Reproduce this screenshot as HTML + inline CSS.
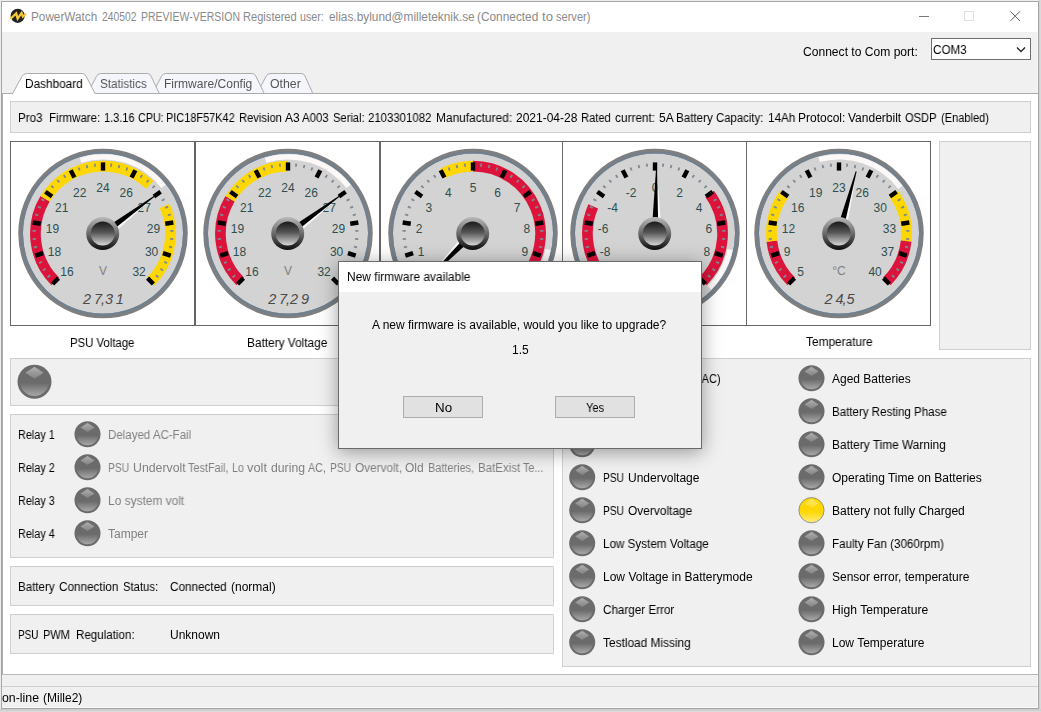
<!DOCTYPE html>
<html><head><meta charset="utf-8"><title>PowerWatch</title>
<style>
html,body{margin:0;padding:0}
body{width:1041px;height:712px;position:relative;overflow:hidden;background:#ececec;font-family:'Liberation Sans',sans-serif;font-size:12px}
.abs{position:absolute;box-sizing:border-box}
.t{will-change:transform;transform-origin:0 0;position:absolute;white-space:pre;line-height:16px;height:16px}
.box{position:absolute;box-sizing:border-box;background:#f0f0f0;border:1px solid #cfcfcf}
svg{position:absolute;left:0;top:0}
svg text{font-family:'Liberation Sans',sans-serif}
</style></head><body>
<!-- window -->
<div class="abs" style="left:1039px;top:0;width:2px;height:712px;background:linear-gradient(90deg,#cdcdcd,#dedede)"></div>
<div class="abs" style="left:0;top:709px;width:1041px;height:3px;background:linear-gradient(180deg,#c8c8c8,#dcdcdc)"></div>
<div class="abs" style="left:1px;top:1px;width:1038px;height:708px;background:#f0f0f0;border:1px solid #a6a6a6;box-shadow:inset -1px -1px 0 #f8f8f8"></div>
<div class="abs" style="left:2px;top:2px;width:1036px;height:30px;background:#fff"></div>
<!-- combo -->
<div class="abs" style="left:931px;top:38px;width:100px;height:22px;background:#fff;border:1px solid #6e6e6e"></div>
<!-- tab panel -->
<div class="abs" style="left:2px;top:93px;width:1036px;height:582px;background:#fff;border:1px solid #acacac;border-bottom-color:#b9b9b9;border-right:none"></div>
<div class="abs" style="left:2px;top:686px;width:1036px;height:1px;background:#d0d0d0"></div>
<!-- boxes -->
<div class="box" style="left:10px;top:101px;width:1021px;height:32px"></div>
<div class="box" style="left:939px;top:141px;width:92px;height:209px"></div>
<div class="box" style="left:10px;top:358px;width:544px;height:48px"></div>
<div class="box" style="left:10px;top:414px;width:544px;height:144px"></div>
<div class="box" style="left:10px;top:566px;width:544px;height:40px"></div>
<div class="box" style="left:10px;top:614px;width:544px;height:40px"></div>
<div class="box" style="left:562px;top:358px;width:469px;height:309px"></div>
<!-- gauge cells -->
<div class="abs" style="left:10px;top:141px;width:921px;height:185px;border:1px solid #666;background:#fff"></div>
<div class="abs" style="left:194px;top:141px;width:2px;height:185px;background:#666"></div>
<div class="abs" style="left:379px;top:141px;width:2px;height:185px;background:#666"></div>
<div class="abs" style="left:562px;top:141px;width:1px;height:185px;background:#6a6a6a"></div>
<div class="abs" style="left:746px;top:141px;width:1px;height:185px;background:#6a6a6a"></div>
<svg width="1041" height="712" viewBox="0 0 1041 712">
<defs>
<linearGradient id="hubo" x1="0" y1="0" x2="0" y2="1"><stop offset="0" stop-color="#b8b8b8"/><stop offset="0.5" stop-color="#6a6a6a"/><stop offset="1" stop-color="#0c0c0c"/></linearGradient>
<linearGradient id="hubi" x1="0" y1="0" x2="0" y2="1"><stop offset="0" stop-color="#1a1a1a"/><stop offset="0.45" stop-color="#555"/><stop offset="1" stop-color="#d8d8d8"/></linearGradient>
<linearGradient id="ledb" x1="0" y1="0" x2="0" y2="1"><stop offset="0" stop-color="#6b6b6b"/><stop offset="0.55" stop-color="#6b6b6b"/><stop offset="1" stop-color="#a8a8a8"/></linearGradient>
<linearGradient id="ledh" x1="0" y1="0" x2="0" y2="1"><stop offset="0" stop-color="#b0b0b0"/><stop offset="1" stop-color="#828282"/></linearGradient>
<linearGradient id="ledyb" x1="0" y1="0" x2="0" y2="1"><stop offset="0" stop-color="#ffd700"/><stop offset="0.55" stop-color="#ffd700"/><stop offset="1" stop-color="#ffec80"/></linearGradient>
<linearGradient id="ledyh" x1="0" y1="0" x2="0" y2="1"><stop offset="0" stop-color="#ffe872"/><stop offset="1" stop-color="#ffdc20"/></linearGradient>
<g id="led"><circle cx="13" cy="13" r="13" fill="#6b6b6b"/><circle cx="13" cy="13" r="11" fill="url(#ledb)"/><path d="M13 1.6L20 6.2L13 10.8L6 6.2Z" fill="url(#ledh)"/></g>
<g id="ledon"><circle cx="13" cy="13" r="12.6" fill="url(#ledyb)" stroke="#858a98" stroke-width="0.9"/><path d="M13 1.6L20 6.2L13 10.8L6 6.2Z" fill="url(#ledyh)"/></g>
</defs>
<!-- tabs -->
<g fill="#f5f6fb" stroke="#acacac" stroke-width="1">
<path d="M257.0 93.5L266.0 76.5Q267.4 73.5 270.2 73.5L301.3 73.5Q303.8 73.5 305.0 76L312.8 93.5Z"/>
<path d="M152.4 93.5L161.4 76.5Q162.8 73.5 165.6 73.5L252.1 73.5Q254.6 73.5 255.8 76L264.2 93.5Z"/>
<path d="M87.4 93.5L96.4 76.5Q97.8 73.5 100.6 73.5L147.3 73.5Q149.8 73.5 151.0 76L159.3 93.5Z"/>
</g>
<path d="M12.5 93.5L22 76.5Q23.7 73.5 26.5 73.5L82 73.5Q84.8 73.5 86 76L95 93.5L95 94.6L12.5 94.6Z" fill="#fff" stroke="none"/>
<path d="M3 93.5L12.5 93.5L22 76.5Q23.7 73.5 26.5 73.5L82 73.5Q84.8 73.5 86 76L95 93.5" fill="none" stroke="#acacac"/>
<!-- title icon -->
<circle cx="17.7" cy="15.8" r="7.1" fill="#222"/>
<path d="M10.3 19L16.2 13.4L17.6 18.6L21.6 12.9L22.8 16.6L26 13.8" fill="none" stroke="#f6c93a" stroke-width="2.2" stroke-linejoin="miter"/>
<!-- window buttons -->
<path d="M919 16.5H929" stroke="#777" stroke-width="1" fill="none"/>
<rect x="964.5" y="11.5" width="9" height="9" fill="none" stroke="#dedede" stroke-width="1"/>
<path d="M1010.3 11.3L1020 21M1020 11.3L1010.3 21" stroke="#666" stroke-width="1" fill="none"/>
<!-- combo chevron -->
<path d="M1017 47.5L1021 51.5L1025 47.5" stroke="#222" stroke-width="1.3" fill="none"/>
<circle cx="103" cy="233.6" r="82.4" fill="#d3d3d3" stroke="#7f7f7f" stroke-width="4.7"/>
<circle cx="103" cy="233.6" r="81.1" fill="none" stroke="#708090" stroke-width="2.2"/>
<path d="M79.79 157.67A79.4 79.4 0 0 1 165.57 184.72L161.47 187.92A74.2 74.2 0 0 0 81.31 162.64Z" fill="#fcf8f8"/>
<path d="M55.23 281.37A67.55 67.55 0 0 1 45.06 198.87" fill="none" stroke="#dc143c" stroke-width="10.7"/>
<path d="M45.06 198.87A67.55 67.55 0 0 1 149.82 184.91" fill="none" stroke="#ffd700" stroke-width="10.7"/>
<path d="M164.62 205.92A67.55 67.55 0 0 1 150.77 281.37" fill="none" stroke="#ffd700" stroke-width="10.7"/>
<rect x="166.0" y="231.4" width="8.2" height="4.4" fill="#000" transform="rotate(-225.00 103 233.6)"/>
<rect x="170.3" y="232.7" width="3.2" height="1.8" fill="#7f8993" transform="rotate(-218.25 103 233.6)"/>
<rect x="170.3" y="232.7" width="3.2" height="1.8" fill="#7f8993" transform="rotate(-211.50 103 233.6)"/>
<rect x="170.3" y="232.7" width="3.2" height="1.8" fill="#7f8993" transform="rotate(-204.75 103 233.6)"/>
<rect x="166.0" y="231.4" width="8.2" height="4.4" fill="#000" transform="rotate(-198.00 103 233.6)"/>
<rect x="170.3" y="232.7" width="3.2" height="1.8" fill="#7f8993" transform="rotate(-191.25 103 233.6)"/>
<rect x="170.3" y="232.7" width="3.2" height="1.8" fill="#7f8993" transform="rotate(-184.50 103 233.6)"/>
<rect x="170.3" y="232.7" width="3.2" height="1.8" fill="#7f8993" transform="rotate(-177.75 103 233.6)"/>
<rect x="166.0" y="231.4" width="8.2" height="4.4" fill="#000" transform="rotate(-171.00 103 233.6)"/>
<rect x="170.3" y="232.7" width="3.2" height="1.8" fill="#7f8993" transform="rotate(-164.25 103 233.6)"/>
<rect x="170.3" y="232.7" width="3.2" height="1.8" fill="#7f8993" transform="rotate(-157.50 103 233.6)"/>
<rect x="170.3" y="232.7" width="3.2" height="1.8" fill="#7f8993" transform="rotate(-150.75 103 233.6)"/>
<rect x="166.0" y="231.4" width="8.2" height="4.4" fill="#000" transform="rotate(-144.00 103 233.6)"/>
<rect x="170.3" y="232.7" width="3.2" height="1.8" fill="#7f8993" transform="rotate(-137.25 103 233.6)"/>
<rect x="170.3" y="232.7" width="3.2" height="1.8" fill="#7f8993" transform="rotate(-130.50 103 233.6)"/>
<rect x="170.3" y="232.7" width="3.2" height="1.8" fill="#7f8993" transform="rotate(-123.75 103 233.6)"/>
<rect x="166.0" y="231.4" width="8.2" height="4.4" fill="#000" transform="rotate(-117.00 103 233.6)"/>
<rect x="170.3" y="232.7" width="3.2" height="1.8" fill="#7f8993" transform="rotate(-110.25 103 233.6)"/>
<rect x="170.3" y="232.7" width="3.2" height="1.8" fill="#7f8993" transform="rotate(-103.50 103 233.6)"/>
<rect x="170.3" y="232.7" width="3.2" height="1.8" fill="#7f8993" transform="rotate(-96.75 103 233.6)"/>
<rect x="166.0" y="231.4" width="8.2" height="4.4" fill="#000" transform="rotate(-90.00 103 233.6)"/>
<rect x="170.3" y="232.7" width="3.2" height="1.8" fill="#7f8993" transform="rotate(-83.25 103 233.6)"/>
<rect x="170.3" y="232.7" width="3.2" height="1.8" fill="#7f8993" transform="rotate(-76.50 103 233.6)"/>
<rect x="170.3" y="232.7" width="3.2" height="1.8" fill="#7f8993" transform="rotate(-69.75 103 233.6)"/>
<rect x="166.0" y="231.4" width="8.2" height="4.4" fill="#000" transform="rotate(-63.00 103 233.6)"/>
<rect x="170.3" y="232.7" width="3.2" height="1.8" fill="#7f8993" transform="rotate(-56.25 103 233.6)"/>
<rect x="170.3" y="232.7" width="3.2" height="1.8" fill="#7f8993" transform="rotate(-49.50 103 233.6)"/>
<rect x="170.3" y="232.7" width="3.2" height="1.8" fill="#7f8993" transform="rotate(-42.75 103 233.6)"/>
<rect x="166.0" y="231.4" width="8.2" height="4.4" fill="#000" transform="rotate(-36.00 103 233.6)"/>
<rect x="170.3" y="232.7" width="3.2" height="1.8" fill="#7f8993" transform="rotate(-29.25 103 233.6)"/>
<rect x="170.3" y="232.7" width="3.2" height="1.8" fill="#7f8993" transform="rotate(-22.50 103 233.6)"/>
<rect x="170.3" y="232.7" width="3.2" height="1.8" fill="#7f8993" transform="rotate(-15.75 103 233.6)"/>
<rect x="166.0" y="231.4" width="8.2" height="4.4" fill="#000" transform="rotate(-9.00 103 233.6)"/>
<rect x="170.3" y="232.7" width="3.2" height="1.8" fill="#7f8993" transform="rotate(-2.25 103 233.6)"/>
<rect x="170.3" y="232.7" width="3.2" height="1.8" fill="#7f8993" transform="rotate(4.50 103 233.6)"/>
<rect x="170.3" y="232.7" width="3.2" height="1.8" fill="#7f8993" transform="rotate(11.25 103 233.6)"/>
<rect x="166.0" y="231.4" width="8.2" height="4.4" fill="#000" transform="rotate(18.00 103 233.6)"/>
<rect x="170.3" y="232.7" width="3.2" height="1.8" fill="#7f8993" transform="rotate(24.75 103 233.6)"/>
<rect x="170.3" y="232.7" width="3.2" height="1.8" fill="#7f8993" transform="rotate(31.50 103 233.6)"/>
<rect x="170.3" y="232.7" width="3.2" height="1.8" fill="#7f8993" transform="rotate(38.25 103 233.6)"/>
<rect x="166.0" y="231.4" width="8.2" height="4.4" fill="#000" transform="rotate(45.00 103 233.6)"/>
<text x="66.9" y="275.5" text-anchor="middle" font-size="12" fill="#2f4f4f">16</text>
<text x="54.4" y="256.0" text-anchor="middle" font-size="12" fill="#2f4f4f">18</text>
<text x="52.5" y="233.2" text-anchor="middle" font-size="12" fill="#2f4f4f">19</text>
<text x="61.7" y="212.1" text-anchor="middle" font-size="12" fill="#2f4f4f">21</text>
<text x="79.8" y="197.2" text-anchor="middle" font-size="12" fill="#2f4f4f">22</text>
<text x="103.0" y="191.9" text-anchor="middle" font-size="12" fill="#2f4f4f">24</text>
<text x="126.2" y="197.2" text-anchor="middle" font-size="12" fill="#2f4f4f">26</text>
<text x="144.3" y="212.1" text-anchor="middle" font-size="12" fill="#2f4f4f">27</text>
<text x="153.5" y="233.2" text-anchor="middle" font-size="12" fill="#2f4f4f">29</text>
<text x="151.6" y="256.0" text-anchor="middle" font-size="12" fill="#2f4f4f">30</text>
<text x="139.1" y="275.5" text-anchor="middle" font-size="12" fill="#2f4f4f">32</text>
<text x="103" y="275.1" text-anchor="middle" font-size="12" fill="#808080">V</text>
<text x="83.1 94.0 101.0 104.9 115.8" y="304.3" font-size="14.5" font-style="italic" font-family="'Liberation Mono',monospace" fill="#4a4a4a">27,31</text>
<g transform="rotate(-36.00 103 233.6)"><path d="M103 234.6L159 234.9L103 240.2Z" fill="#f8f8f8"/><path d="M103 230.2L167.5 233.1L167.5 234.1L103 237.0Z" fill="#000"/></g>
<circle cx="102.7" cy="233.6" r="16.5" fill="url(#hubo)"/><circle cx="102.7" cy="233.6" r="12" fill="url(#hubi)"/>
<circle cx="288" cy="233.6" r="82.4" fill="#d3d3d3" stroke="#7f7f7f" stroke-width="4.7"/>
<circle cx="288" cy="233.6" r="81.1" fill="none" stroke="#708090" stroke-width="2.2"/>
<path d="M264.79 157.67A79.4 79.4 0 0 1 350.57 184.72L346.47 187.92A74.2 74.2 0 0 0 266.31 162.64Z" fill="#fcf8f8"/>
<path d="M240.23 281.37A67.55 67.55 0 0 1 230.06 198.87" fill="none" stroke="#dc143c" stroke-width="10.7"/>
<path d="M230.06 198.87A67.55 67.55 0 0 1 288.00 166.05" fill="none" stroke="#ffd700" stroke-width="10.7"/>
<rect x="351.0" y="231.4" width="8.2" height="4.4" fill="#000" transform="rotate(-225.00 288 233.6)"/>
<rect x="355.3" y="232.7" width="3.2" height="1.8" fill="#7f8993" transform="rotate(-218.25 288 233.6)"/>
<rect x="355.3" y="232.7" width="3.2" height="1.8" fill="#7f8993" transform="rotate(-211.50 288 233.6)"/>
<rect x="355.3" y="232.7" width="3.2" height="1.8" fill="#7f8993" transform="rotate(-204.75 288 233.6)"/>
<rect x="351.0" y="231.4" width="8.2" height="4.4" fill="#000" transform="rotate(-198.00 288 233.6)"/>
<rect x="355.3" y="232.7" width="3.2" height="1.8" fill="#7f8993" transform="rotate(-191.25 288 233.6)"/>
<rect x="355.3" y="232.7" width="3.2" height="1.8" fill="#7f8993" transform="rotate(-184.50 288 233.6)"/>
<rect x="355.3" y="232.7" width="3.2" height="1.8" fill="#7f8993" transform="rotate(-177.75 288 233.6)"/>
<rect x="351.0" y="231.4" width="8.2" height="4.4" fill="#000" transform="rotate(-171.00 288 233.6)"/>
<rect x="355.3" y="232.7" width="3.2" height="1.8" fill="#7f8993" transform="rotate(-164.25 288 233.6)"/>
<rect x="355.3" y="232.7" width="3.2" height="1.8" fill="#7f8993" transform="rotate(-157.50 288 233.6)"/>
<rect x="355.3" y="232.7" width="3.2" height="1.8" fill="#7f8993" transform="rotate(-150.75 288 233.6)"/>
<rect x="351.0" y="231.4" width="8.2" height="4.4" fill="#000" transform="rotate(-144.00 288 233.6)"/>
<rect x="355.3" y="232.7" width="3.2" height="1.8" fill="#7f8993" transform="rotate(-137.25 288 233.6)"/>
<rect x="355.3" y="232.7" width="3.2" height="1.8" fill="#7f8993" transform="rotate(-130.50 288 233.6)"/>
<rect x="355.3" y="232.7" width="3.2" height="1.8" fill="#7f8993" transform="rotate(-123.75 288 233.6)"/>
<rect x="351.0" y="231.4" width="8.2" height="4.4" fill="#000" transform="rotate(-117.00 288 233.6)"/>
<rect x="355.3" y="232.7" width="3.2" height="1.8" fill="#7f8993" transform="rotate(-110.25 288 233.6)"/>
<rect x="355.3" y="232.7" width="3.2" height="1.8" fill="#7f8993" transform="rotate(-103.50 288 233.6)"/>
<rect x="355.3" y="232.7" width="3.2" height="1.8" fill="#7f8993" transform="rotate(-96.75 288 233.6)"/>
<rect x="351.0" y="231.4" width="8.2" height="4.4" fill="#000" transform="rotate(-90.00 288 233.6)"/>
<rect x="355.3" y="232.7" width="3.2" height="1.8" fill="#7f8993" transform="rotate(-83.25 288 233.6)"/>
<rect x="355.3" y="232.7" width="3.2" height="1.8" fill="#7f8993" transform="rotate(-76.50 288 233.6)"/>
<rect x="355.3" y="232.7" width="3.2" height="1.8" fill="#7f8993" transform="rotate(-69.75 288 233.6)"/>
<rect x="351.0" y="231.4" width="8.2" height="4.4" fill="#000" transform="rotate(-63.00 288 233.6)"/>
<rect x="355.3" y="232.7" width="3.2" height="1.8" fill="#7f8993" transform="rotate(-56.25 288 233.6)"/>
<rect x="355.3" y="232.7" width="3.2" height="1.8" fill="#7f8993" transform="rotate(-49.50 288 233.6)"/>
<rect x="355.3" y="232.7" width="3.2" height="1.8" fill="#7f8993" transform="rotate(-42.75 288 233.6)"/>
<rect x="351.0" y="231.4" width="8.2" height="4.4" fill="#000" transform="rotate(-36.00 288 233.6)"/>
<rect x="355.3" y="232.7" width="3.2" height="1.8" fill="#7f8993" transform="rotate(-29.25 288 233.6)"/>
<rect x="355.3" y="232.7" width="3.2" height="1.8" fill="#7f8993" transform="rotate(-22.50 288 233.6)"/>
<rect x="355.3" y="232.7" width="3.2" height="1.8" fill="#7f8993" transform="rotate(-15.75 288 233.6)"/>
<rect x="351.0" y="231.4" width="8.2" height="4.4" fill="#000" transform="rotate(-9.00 288 233.6)"/>
<rect x="355.3" y="232.7" width="3.2" height="1.8" fill="#7f8993" transform="rotate(-2.25 288 233.6)"/>
<rect x="355.3" y="232.7" width="3.2" height="1.8" fill="#7f8993" transform="rotate(4.50 288 233.6)"/>
<rect x="355.3" y="232.7" width="3.2" height="1.8" fill="#7f8993" transform="rotate(11.25 288 233.6)"/>
<rect x="351.0" y="231.4" width="8.2" height="4.4" fill="#000" transform="rotate(18.00 288 233.6)"/>
<rect x="355.3" y="232.7" width="3.2" height="1.8" fill="#7f8993" transform="rotate(24.75 288 233.6)"/>
<rect x="355.3" y="232.7" width="3.2" height="1.8" fill="#7f8993" transform="rotate(31.50 288 233.6)"/>
<rect x="355.3" y="232.7" width="3.2" height="1.8" fill="#7f8993" transform="rotate(38.25 288 233.6)"/>
<rect x="351.0" y="231.4" width="8.2" height="4.4" fill="#000" transform="rotate(45.00 288 233.6)"/>
<text x="251.9" y="275.5" text-anchor="middle" font-size="12" fill="#2f4f4f">16</text>
<text x="239.4" y="256.0" text-anchor="middle" font-size="12" fill="#2f4f4f">18</text>
<text x="237.5" y="233.2" text-anchor="middle" font-size="12" fill="#2f4f4f">19</text>
<text x="246.7" y="212.1" text-anchor="middle" font-size="12" fill="#2f4f4f">21</text>
<text x="264.8" y="197.2" text-anchor="middle" font-size="12" fill="#2f4f4f">22</text>
<text x="288.0" y="191.9" text-anchor="middle" font-size="12" fill="#2f4f4f">24</text>
<text x="311.2" y="197.2" text-anchor="middle" font-size="12" fill="#2f4f4f">26</text>
<text x="329.3" y="212.1" text-anchor="middle" font-size="12" fill="#2f4f4f">27</text>
<text x="338.5" y="233.2" text-anchor="middle" font-size="12" fill="#2f4f4f">29</text>
<text x="336.6" y="256.0" text-anchor="middle" font-size="12" fill="#2f4f4f">30</text>
<text x="324.1" y="275.5" text-anchor="middle" font-size="12" fill="#2f4f4f">32</text>
<text x="288" y="275.1" text-anchor="middle" font-size="12" fill="#808080">V</text>
<text x="268.2 279.1 286.1 290.0 300.9" y="304.3" font-size="14.5" font-style="italic" font-family="'Liberation Mono',monospace" fill="#4a4a4a">27,29</text>
<g transform="rotate(-36.00 288 233.6)"><path d="M288 234.6L344 234.9L288 240.2Z" fill="#f8f8f8"/><path d="M288 230.2L352.5 233.1L352.5 234.1L288 237.0Z" fill="#000"/></g>
<circle cx="287.7" cy="233.6" r="16.5" fill="url(#hubo)"/><circle cx="287.7" cy="233.6" r="12" fill="url(#hubi)"/>
<circle cx="473" cy="233.6" r="82.4" fill="#d3d3d3" stroke="#7f7f7f" stroke-width="4.7"/>
<circle cx="473" cy="233.6" r="81.1" fill="none" stroke="#708090" stroke-width="2.2"/>
<path d="M550.66 250.11A79.4 79.4 0 0 1 529.14 289.74L525.47 286.07A74.2 74.2 0 0 0 545.58 249.03Z" fill="#fcf8f8"/>
<path d="M442.33 173.41A67.55 67.55 0 0 1 473.00 166.05" fill="none" stroke="#ffd700" stroke-width="10.7"/>
<path d="M473.00 166.05A67.55 67.55 0 0 1 520.77 281.37" fill="none" stroke="#dc143c" stroke-width="10.7"/>
<rect x="536.0" y="231.4" width="8.2" height="4.4" fill="#000" transform="rotate(-225.00 473 233.6)"/>
<rect x="540.3" y="232.7" width="3.2" height="1.8" fill="#7f8993" transform="rotate(-218.25 473 233.6)"/>
<rect x="540.3" y="232.7" width="3.2" height="1.8" fill="#7f8993" transform="rotate(-211.50 473 233.6)"/>
<rect x="540.3" y="232.7" width="3.2" height="1.8" fill="#7f8993" transform="rotate(-204.75 473 233.6)"/>
<rect x="536.0" y="231.4" width="8.2" height="4.4" fill="#000" transform="rotate(-198.00 473 233.6)"/>
<rect x="540.3" y="232.7" width="3.2" height="1.8" fill="#7f8993" transform="rotate(-191.25 473 233.6)"/>
<rect x="540.3" y="232.7" width="3.2" height="1.8" fill="#7f8993" transform="rotate(-184.50 473 233.6)"/>
<rect x="540.3" y="232.7" width="3.2" height="1.8" fill="#7f8993" transform="rotate(-177.75 473 233.6)"/>
<rect x="536.0" y="231.4" width="8.2" height="4.4" fill="#000" transform="rotate(-171.00 473 233.6)"/>
<rect x="540.3" y="232.7" width="3.2" height="1.8" fill="#7f8993" transform="rotate(-164.25 473 233.6)"/>
<rect x="540.3" y="232.7" width="3.2" height="1.8" fill="#7f8993" transform="rotate(-157.50 473 233.6)"/>
<rect x="540.3" y="232.7" width="3.2" height="1.8" fill="#7f8993" transform="rotate(-150.75 473 233.6)"/>
<rect x="536.0" y="231.4" width="8.2" height="4.4" fill="#000" transform="rotate(-144.00 473 233.6)"/>
<rect x="540.3" y="232.7" width="3.2" height="1.8" fill="#7f8993" transform="rotate(-137.25 473 233.6)"/>
<rect x="540.3" y="232.7" width="3.2" height="1.8" fill="#7f8993" transform="rotate(-130.50 473 233.6)"/>
<rect x="540.3" y="232.7" width="3.2" height="1.8" fill="#7f8993" transform="rotate(-123.75 473 233.6)"/>
<rect x="536.0" y="231.4" width="8.2" height="4.4" fill="#000" transform="rotate(-117.00 473 233.6)"/>
<rect x="540.3" y="232.7" width="3.2" height="1.8" fill="#7f8993" transform="rotate(-110.25 473 233.6)"/>
<rect x="540.3" y="232.7" width="3.2" height="1.8" fill="#7f8993" transform="rotate(-103.50 473 233.6)"/>
<rect x="540.3" y="232.7" width="3.2" height="1.8" fill="#7f8993" transform="rotate(-96.75 473 233.6)"/>
<rect x="536.0" y="231.4" width="8.2" height="4.4" fill="#000" transform="rotate(-90.00 473 233.6)"/>
<rect x="540.3" y="232.7" width="3.2" height="1.8" fill="#7f8993" transform="rotate(-83.25 473 233.6)"/>
<rect x="540.3" y="232.7" width="3.2" height="1.8" fill="#7f8993" transform="rotate(-76.50 473 233.6)"/>
<rect x="540.3" y="232.7" width="3.2" height="1.8" fill="#7f8993" transform="rotate(-69.75 473 233.6)"/>
<rect x="536.0" y="231.4" width="8.2" height="4.4" fill="#000" transform="rotate(-63.00 473 233.6)"/>
<rect x="540.3" y="232.7" width="3.2" height="1.8" fill="#7f8993" transform="rotate(-56.25 473 233.6)"/>
<rect x="540.3" y="232.7" width="3.2" height="1.8" fill="#7f8993" transform="rotate(-49.50 473 233.6)"/>
<rect x="540.3" y="232.7" width="3.2" height="1.8" fill="#7f8993" transform="rotate(-42.75 473 233.6)"/>
<rect x="536.0" y="231.4" width="8.2" height="4.4" fill="#000" transform="rotate(-36.00 473 233.6)"/>
<rect x="540.3" y="232.7" width="3.2" height="1.8" fill="#7f8993" transform="rotate(-29.25 473 233.6)"/>
<rect x="540.3" y="232.7" width="3.2" height="1.8" fill="#7f8993" transform="rotate(-22.50 473 233.6)"/>
<rect x="540.3" y="232.7" width="3.2" height="1.8" fill="#7f8993" transform="rotate(-15.75 473 233.6)"/>
<rect x="536.0" y="231.4" width="8.2" height="4.4" fill="#000" transform="rotate(-9.00 473 233.6)"/>
<rect x="540.3" y="232.7" width="3.2" height="1.8" fill="#7f8993" transform="rotate(-2.25 473 233.6)"/>
<rect x="540.3" y="232.7" width="3.2" height="1.8" fill="#7f8993" transform="rotate(4.50 473 233.6)"/>
<rect x="540.3" y="232.7" width="3.2" height="1.8" fill="#7f8993" transform="rotate(11.25 473 233.6)"/>
<rect x="536.0" y="231.4" width="8.2" height="4.4" fill="#000" transform="rotate(18.00 473 233.6)"/>
<rect x="540.3" y="232.7" width="3.2" height="1.8" fill="#7f8993" transform="rotate(24.75 473 233.6)"/>
<rect x="540.3" y="232.7" width="3.2" height="1.8" fill="#7f8993" transform="rotate(31.50 473 233.6)"/>
<rect x="540.3" y="232.7" width="3.2" height="1.8" fill="#7f8993" transform="rotate(38.25 473 233.6)"/>
<rect x="536.0" y="231.4" width="8.2" height="4.4" fill="#000" transform="rotate(45.00 473 233.6)"/>
<text x="421.2" y="256.0" text-anchor="middle" font-size="12" fill="#2f4f4f">1</text>
<text x="419.2" y="233.2" text-anchor="middle" font-size="12" fill="#2f4f4f">2</text>
<text x="428.9" y="212.1" text-anchor="middle" font-size="12" fill="#2f4f4f">3</text>
<text x="448.3" y="197.2" text-anchor="middle" font-size="12" fill="#2f4f4f">4</text>
<text x="473.0" y="191.9" text-anchor="middle" font-size="12" fill="#2f4f4f">5</text>
<text x="497.7" y="197.2" text-anchor="middle" font-size="12" fill="#2f4f4f">6</text>
<text x="517.1" y="212.1" text-anchor="middle" font-size="12" fill="#2f4f4f">7</text>
<text x="526.8" y="233.2" text-anchor="middle" font-size="12" fill="#2f4f4f">8</text>
<text x="524.8" y="256.0" text-anchor="middle" font-size="12" fill="#2f4f4f">9</text>
<g transform="rotate(-225.00 473 233.6)"><path d="M473 234.6L529 234.9L473 240.2Z" fill="#f8f8f8"/><path d="M473 230.2L537.5 233.1L537.5 234.1L473 237.0Z" fill="#000"/></g>
<circle cx="472.7" cy="233.6" r="16.5" fill="url(#hubo)"/><circle cx="472.7" cy="233.6" r="12" fill="url(#hubi)"/>
<circle cx="655" cy="233.6" r="82.4" fill="#d3d3d3" stroke="#7f7f7f" stroke-width="4.7"/>
<circle cx="655" cy="233.6" r="81.1" fill="none" stroke="#708090" stroke-width="2.2"/>
<path d="M732.66 250.11A79.4 79.4 0 0 1 711.14 289.74L707.47 286.07A74.2 74.2 0 0 0 727.58 249.03Z" fill="#fcf8f8"/>
<path d="M607.23 281.37A67.55 67.55 0 0 1 593.22 206.29" fill="none" stroke="#dc143c" stroke-width="10.7"/>
<path d="M709.65 193.90A67.55 67.55 0 0 1 702.77 281.37" fill="none" stroke="#dc143c" stroke-width="10.7"/>
<rect x="718.0" y="231.4" width="8.2" height="4.4" fill="#000" transform="rotate(-225.00 655 233.6)"/>
<rect x="722.3" y="232.7" width="3.2" height="1.8" fill="#7f8993" transform="rotate(-218.25 655 233.6)"/>
<rect x="722.3" y="232.7" width="3.2" height="1.8" fill="#7f8993" transform="rotate(-211.50 655 233.6)"/>
<rect x="722.3" y="232.7" width="3.2" height="1.8" fill="#7f8993" transform="rotate(-204.75 655 233.6)"/>
<rect x="718.0" y="231.4" width="8.2" height="4.4" fill="#000" transform="rotate(-198.00 655 233.6)"/>
<rect x="722.3" y="232.7" width="3.2" height="1.8" fill="#7f8993" transform="rotate(-191.25 655 233.6)"/>
<rect x="722.3" y="232.7" width="3.2" height="1.8" fill="#7f8993" transform="rotate(-184.50 655 233.6)"/>
<rect x="722.3" y="232.7" width="3.2" height="1.8" fill="#7f8993" transform="rotate(-177.75 655 233.6)"/>
<rect x="718.0" y="231.4" width="8.2" height="4.4" fill="#000" transform="rotate(-171.00 655 233.6)"/>
<rect x="722.3" y="232.7" width="3.2" height="1.8" fill="#7f8993" transform="rotate(-164.25 655 233.6)"/>
<rect x="722.3" y="232.7" width="3.2" height="1.8" fill="#7f8993" transform="rotate(-157.50 655 233.6)"/>
<rect x="722.3" y="232.7" width="3.2" height="1.8" fill="#7f8993" transform="rotate(-150.75 655 233.6)"/>
<rect x="718.0" y="231.4" width="8.2" height="4.4" fill="#000" transform="rotate(-144.00 655 233.6)"/>
<rect x="722.3" y="232.7" width="3.2" height="1.8" fill="#7f8993" transform="rotate(-137.25 655 233.6)"/>
<rect x="722.3" y="232.7" width="3.2" height="1.8" fill="#7f8993" transform="rotate(-130.50 655 233.6)"/>
<rect x="722.3" y="232.7" width="3.2" height="1.8" fill="#7f8993" transform="rotate(-123.75 655 233.6)"/>
<rect x="718.0" y="231.4" width="8.2" height="4.4" fill="#000" transform="rotate(-117.00 655 233.6)"/>
<rect x="722.3" y="232.7" width="3.2" height="1.8" fill="#7f8993" transform="rotate(-110.25 655 233.6)"/>
<rect x="722.3" y="232.7" width="3.2" height="1.8" fill="#7f8993" transform="rotate(-103.50 655 233.6)"/>
<rect x="722.3" y="232.7" width="3.2" height="1.8" fill="#7f8993" transform="rotate(-96.75 655 233.6)"/>
<rect x="718.0" y="231.4" width="8.2" height="4.4" fill="#000" transform="rotate(-90.00 655 233.6)"/>
<rect x="722.3" y="232.7" width="3.2" height="1.8" fill="#7f8993" transform="rotate(-83.25 655 233.6)"/>
<rect x="722.3" y="232.7" width="3.2" height="1.8" fill="#7f8993" transform="rotate(-76.50 655 233.6)"/>
<rect x="722.3" y="232.7" width="3.2" height="1.8" fill="#7f8993" transform="rotate(-69.75 655 233.6)"/>
<rect x="718.0" y="231.4" width="8.2" height="4.4" fill="#000" transform="rotate(-63.00 655 233.6)"/>
<rect x="722.3" y="232.7" width="3.2" height="1.8" fill="#7f8993" transform="rotate(-56.25 655 233.6)"/>
<rect x="722.3" y="232.7" width="3.2" height="1.8" fill="#7f8993" transform="rotate(-49.50 655 233.6)"/>
<rect x="722.3" y="232.7" width="3.2" height="1.8" fill="#7f8993" transform="rotate(-42.75 655 233.6)"/>
<rect x="718.0" y="231.4" width="8.2" height="4.4" fill="#000" transform="rotate(-36.00 655 233.6)"/>
<rect x="722.3" y="232.7" width="3.2" height="1.8" fill="#7f8993" transform="rotate(-29.25 655 233.6)"/>
<rect x="722.3" y="232.7" width="3.2" height="1.8" fill="#7f8993" transform="rotate(-22.50 655 233.6)"/>
<rect x="722.3" y="232.7" width="3.2" height="1.8" fill="#7f8993" transform="rotate(-15.75 655 233.6)"/>
<rect x="718.0" y="231.4" width="8.2" height="4.4" fill="#000" transform="rotate(-9.00 655 233.6)"/>
<rect x="722.3" y="232.7" width="3.2" height="1.8" fill="#7f8993" transform="rotate(-2.25 655 233.6)"/>
<rect x="722.3" y="232.7" width="3.2" height="1.8" fill="#7f8993" transform="rotate(4.50 655 233.6)"/>
<rect x="722.3" y="232.7" width="3.2" height="1.8" fill="#7f8993" transform="rotate(11.25 655 233.6)"/>
<rect x="718.0" y="231.4" width="8.2" height="4.4" fill="#000" transform="rotate(18.00 655 233.6)"/>
<rect x="722.3" y="232.7" width="3.2" height="1.8" fill="#7f8993" transform="rotate(24.75 655 233.6)"/>
<rect x="722.3" y="232.7" width="3.2" height="1.8" fill="#7f8993" transform="rotate(31.50 655 233.6)"/>
<rect x="722.3" y="232.7" width="3.2" height="1.8" fill="#7f8993" transform="rotate(38.25 655 233.6)"/>
<rect x="718.0" y="231.4" width="8.2" height="4.4" fill="#000" transform="rotate(45.00 655 233.6)"/>
<text x="605.1" y="256.0" text-anchor="middle" font-size="12" fill="#2f4f4f">-8</text>
<text x="603.2" y="233.2" text-anchor="middle" font-size="12" fill="#2f4f4f">-6</text>
<text x="612.6" y="212.1" text-anchor="middle" font-size="12" fill="#2f4f4f">-4</text>
<text x="631.2" y="197.2" text-anchor="middle" font-size="12" fill="#2f4f4f">-2</text>
<text x="655.0" y="191.9" text-anchor="middle" font-size="12" fill="#2f4f4f">0</text>
<text x="679.7" y="197.2" text-anchor="middle" font-size="12" fill="#2f4f4f">2</text>
<text x="699.1" y="212.1" text-anchor="middle" font-size="12" fill="#2f4f4f">4</text>
<text x="708.8" y="233.2" text-anchor="middle" font-size="12" fill="#2f4f4f">6</text>
<text x="706.8" y="256.0" text-anchor="middle" font-size="12" fill="#2f4f4f">8</text>
<g transform="rotate(-88.65 655 233.6)"><path d="M655 234.6L711 234.9L655 240.2Z" fill="#f8f8f8"/><path d="M655 230.2L719.5 233.1L719.5 234.1L655 237.0Z" fill="#000"/></g>
<circle cx="654.7" cy="233.6" r="16.5" fill="url(#hubo)"/><circle cx="654.7" cy="233.6" r="12" fill="url(#hubi)"/>
<circle cx="839" cy="233.6" r="82.4" fill="#d3d3d3" stroke="#7f7f7f" stroke-width="4.7"/>
<circle cx="839" cy="233.6" r="81.1" fill="none" stroke="#708090" stroke-width="2.2"/>
<path d="M818.45 156.91A79.4 79.4 0 0 1 902.41 185.82L898.26 188.95A74.2 74.2 0 0 0 819.80 161.93Z" fill="#fcf8f8"/>
<path d="M791.23 281.37A67.55 67.55 0 0 1 771.87 241.16" fill="none" stroke="#dc143c" stroke-width="10.7"/>
<path d="M771.87 241.16A67.55 67.55 0 0 1 784.35 193.90" fill="none" stroke="#ffd700" stroke-width="10.7"/>
<path d="M893.65 193.90A67.55 67.55 0 0 1 906.13 241.16" fill="none" stroke="#ffd700" stroke-width="10.7"/>
<path d="M906.13 241.16A67.55 67.55 0 0 1 886.77 281.37" fill="none" stroke="#dc143c" stroke-width="10.7"/>
<rect x="902.0" y="231.4" width="8.2" height="4.4" fill="#000" transform="rotate(-225.00 839 233.6)"/>
<rect x="906.3" y="232.7" width="3.2" height="1.8" fill="#7f8993" transform="rotate(-218.25 839 233.6)"/>
<rect x="906.3" y="232.7" width="3.2" height="1.8" fill="#7f8993" transform="rotate(-211.50 839 233.6)"/>
<rect x="906.3" y="232.7" width="3.2" height="1.8" fill="#7f8993" transform="rotate(-204.75 839 233.6)"/>
<rect x="902.0" y="231.4" width="8.2" height="4.4" fill="#000" transform="rotate(-198.00 839 233.6)"/>
<rect x="906.3" y="232.7" width="3.2" height="1.8" fill="#7f8993" transform="rotate(-191.25 839 233.6)"/>
<rect x="906.3" y="232.7" width="3.2" height="1.8" fill="#7f8993" transform="rotate(-184.50 839 233.6)"/>
<rect x="906.3" y="232.7" width="3.2" height="1.8" fill="#7f8993" transform="rotate(-177.75 839 233.6)"/>
<rect x="902.0" y="231.4" width="8.2" height="4.4" fill="#000" transform="rotate(-171.00 839 233.6)"/>
<rect x="906.3" y="232.7" width="3.2" height="1.8" fill="#7f8993" transform="rotate(-164.25 839 233.6)"/>
<rect x="906.3" y="232.7" width="3.2" height="1.8" fill="#7f8993" transform="rotate(-157.50 839 233.6)"/>
<rect x="906.3" y="232.7" width="3.2" height="1.8" fill="#7f8993" transform="rotate(-150.75 839 233.6)"/>
<rect x="902.0" y="231.4" width="8.2" height="4.4" fill="#000" transform="rotate(-144.00 839 233.6)"/>
<rect x="906.3" y="232.7" width="3.2" height="1.8" fill="#7f8993" transform="rotate(-137.25 839 233.6)"/>
<rect x="906.3" y="232.7" width="3.2" height="1.8" fill="#7f8993" transform="rotate(-130.50 839 233.6)"/>
<rect x="906.3" y="232.7" width="3.2" height="1.8" fill="#7f8993" transform="rotate(-123.75 839 233.6)"/>
<rect x="902.0" y="231.4" width="8.2" height="4.4" fill="#000" transform="rotate(-117.00 839 233.6)"/>
<rect x="906.3" y="232.7" width="3.2" height="1.8" fill="#7f8993" transform="rotate(-110.25 839 233.6)"/>
<rect x="906.3" y="232.7" width="3.2" height="1.8" fill="#7f8993" transform="rotate(-103.50 839 233.6)"/>
<rect x="906.3" y="232.7" width="3.2" height="1.8" fill="#7f8993" transform="rotate(-96.75 839 233.6)"/>
<rect x="902.0" y="231.4" width="8.2" height="4.4" fill="#000" transform="rotate(-90.00 839 233.6)"/>
<rect x="906.3" y="232.7" width="3.2" height="1.8" fill="#7f8993" transform="rotate(-83.25 839 233.6)"/>
<rect x="906.3" y="232.7" width="3.2" height="1.8" fill="#7f8993" transform="rotate(-76.50 839 233.6)"/>
<rect x="906.3" y="232.7" width="3.2" height="1.8" fill="#7f8993" transform="rotate(-69.75 839 233.6)"/>
<rect x="902.0" y="231.4" width="8.2" height="4.4" fill="#000" transform="rotate(-63.00 839 233.6)"/>
<rect x="906.3" y="232.7" width="3.2" height="1.8" fill="#7f8993" transform="rotate(-56.25 839 233.6)"/>
<rect x="906.3" y="232.7" width="3.2" height="1.8" fill="#7f8993" transform="rotate(-49.50 839 233.6)"/>
<rect x="906.3" y="232.7" width="3.2" height="1.8" fill="#7f8993" transform="rotate(-42.75 839 233.6)"/>
<rect x="902.0" y="231.4" width="8.2" height="4.4" fill="#000" transform="rotate(-36.00 839 233.6)"/>
<rect x="906.3" y="232.7" width="3.2" height="1.8" fill="#7f8993" transform="rotate(-29.25 839 233.6)"/>
<rect x="906.3" y="232.7" width="3.2" height="1.8" fill="#7f8993" transform="rotate(-22.50 839 233.6)"/>
<rect x="906.3" y="232.7" width="3.2" height="1.8" fill="#7f8993" transform="rotate(-15.75 839 233.6)"/>
<rect x="902.0" y="231.4" width="8.2" height="4.4" fill="#000" transform="rotate(-9.00 839 233.6)"/>
<rect x="906.3" y="232.7" width="3.2" height="1.8" fill="#7f8993" transform="rotate(-2.25 839 233.6)"/>
<rect x="906.3" y="232.7" width="3.2" height="1.8" fill="#7f8993" transform="rotate(4.50 839 233.6)"/>
<rect x="906.3" y="232.7" width="3.2" height="1.8" fill="#7f8993" transform="rotate(11.25 839 233.6)"/>
<rect x="902.0" y="231.4" width="8.2" height="4.4" fill="#000" transform="rotate(18.00 839 233.6)"/>
<rect x="906.3" y="232.7" width="3.2" height="1.8" fill="#7f8993" transform="rotate(24.75 839 233.6)"/>
<rect x="906.3" y="232.7" width="3.2" height="1.8" fill="#7f8993" transform="rotate(31.50 839 233.6)"/>
<rect x="906.3" y="232.7" width="3.2" height="1.8" fill="#7f8993" transform="rotate(38.25 839 233.6)"/>
<rect x="902.0" y="231.4" width="8.2" height="4.4" fill="#000" transform="rotate(45.00 839 233.6)"/>
<text x="800.5" y="275.5" text-anchor="middle" font-size="12" fill="#2f4f4f">5</text>
<text x="787.2" y="256.0" text-anchor="middle" font-size="12" fill="#2f4f4f">9</text>
<text x="788.5" y="233.2" text-anchor="middle" font-size="12" fill="#2f4f4f">12</text>
<text x="797.7" y="212.1" text-anchor="middle" font-size="12" fill="#2f4f4f">16</text>
<text x="815.8" y="197.2" text-anchor="middle" font-size="12" fill="#2f4f4f">19</text>
<text x="839.0" y="191.9" text-anchor="middle" font-size="12" fill="#2f4f4f">23</text>
<text x="862.2" y="197.2" text-anchor="middle" font-size="12" fill="#2f4f4f">26</text>
<text x="880.3" y="212.1" text-anchor="middle" font-size="12" fill="#2f4f4f">30</text>
<text x="889.5" y="233.2" text-anchor="middle" font-size="12" fill="#2f4f4f">33</text>
<text x="887.6" y="256.0" text-anchor="middle" font-size="12" fill="#2f4f4f">37</text>
<text x="875.1" y="275.5" text-anchor="middle" font-size="12" fill="#2f4f4f">40</text>
<text x="839" y="275.1" text-anchor="middle" font-size="12" fill="#808080">°C</text>
<text x="824.6 835.5 842.5 846.4" y="304.3" font-size="14.5" font-style="italic" font-family="'Liberation Mono',monospace" fill="#4a4a4a">24,5</text>
<g transform="rotate(-74.57 839 233.6)"><path d="M839 234.6L895 234.9L839 240.2Z" fill="#f8f8f8"/><path d="M839 230.2L903.5 233.1L903.5 234.1L839 237.0Z" fill="#000"/></g>
<circle cx="838.7" cy="233.6" r="16.5" fill="url(#hubo)"/><circle cx="838.7" cy="233.6" r="12" fill="url(#hubi)"/>
<use href="#led" transform="translate(17.5 364.7) scale(1.3077)"/>
<use href="#led" transform="translate(74.5 421.3) scale(1.0000)"/>
<use href="#led" transform="translate(74.5 454.3) scale(1.0000)"/>
<use href="#led" transform="translate(74.5 487.3) scale(1.0000)"/>
<use href="#led" transform="translate(74.5 520.3) scale(1.0000)"/>
<use href="#led" transform="translate(569.2 365.2) scale(1.0000)"/>
<use href="#led" transform="translate(798.5 365.2) scale(1.0000)"/>
<use href="#led" transform="translate(569.2 398.2) scale(1.0000)"/>
<use href="#led" transform="translate(798.5 398.2) scale(1.0000)"/>
<use href="#led" transform="translate(569.2 431.2) scale(1.0000)"/>
<use href="#led" transform="translate(798.5 431.2) scale(1.0000)"/>
<use href="#led" transform="translate(569.2 464.2) scale(1.0000)"/>
<use href="#led" transform="translate(798.5 464.2) scale(1.0000)"/>
<use href="#led" transform="translate(569.2 497.2) scale(1.0000)"/>
<use href="#ledon" transform="translate(798.5 497.2) scale(1.0000)"/>
<use href="#led" transform="translate(569.2 530.2) scale(1.0000)"/>
<use href="#led" transform="translate(798.5 530.2) scale(1.0000)"/>
<use href="#led" transform="translate(569.2 563.2) scale(1.0000)"/>
<use href="#led" transform="translate(798.5 563.2) scale(1.0000)"/>
<use href="#led" transform="translate(569.2 596.2) scale(1.0000)"/>
<use href="#led" transform="translate(798.5 596.2) scale(1.0000)"/>
<use href="#led" transform="translate(569.2 629.2) scale(1.0000)"/>
<use href="#led" transform="translate(798.5 629.2) scale(1.0000)"/>
</svg>
<div class="t" style="left:31.4px;top:8.5px;font-size:12px;color:#8a8a8a;transform:scaleX(0.9796);will-change:auto;">PowerWatch</div>
<div class="t" style="left:101.6px;top:8.5px;font-size:12px;color:#8a8a8a;transform:scaleX(0.8590);will-change:auto;">240502</div>
<div class="t" style="left:140.6px;top:8.5px;font-size:12px;color:#8a8a8a;transform:scaleX(0.8750);will-change:auto;">PREVIEW-VERSION</div>
<div class="t" style="left:242.6px;top:8.5px;font-size:12px;color:#8a8a8a;transform:scaleX(0.9254);will-change:auto;">Registered</div>
<div class="t" style="left:300.3px;top:8.5px;font-size:12px;color:#8a8a8a;transform:scaleX(0.8918);will-change:auto;">user:</div>
<div class="t" style="left:328.7px;top:8.5px;font-size:12px;color:#8a8a8a;transform:scaleX(0.9872);will-change:auto;">elias.bylund@milleteknik.se</div>
<div class="t" style="left:477.4px;top:8.5px;font-size:12px;color:#8a8a8a;transform:scaleX(0.9880);will-change:auto;">(Connected</div>
<div class="t" style="left:542.2px;top:8.5px;font-size:12px;color:#8a8a8a;transform:scaleX(1.0883);will-change:auto;">to</div>
<div class="t" style="left:556.2px;top:8.5px;font-size:12px;color:#8a8a8a;transform:scaleX(0.9212);will-change:auto;">server)</div>
<div class="t" style="left:802.9px;top:43.5px;font-size:12px;color:#000;transform:scaleX(1.0065);">Connect to Com port:</div>
<div class="t" style="left:933.0px;top:41.5px;font-size:12px;color:#000;transform:scaleX(0.9720);">COM3</div>
<div class="t" style="left:24.6px;top:75.5px;font-size:12px;color:#000;transform:scaleX(0.9844);">Dashboard</div>
<div class="t" style="left:99.6px;top:75.5px;font-size:12px;color:#555;transform:scaleX(0.9747);">Statistics</div>
<div class="t" style="left:163.6px;top:75.5px;font-size:12px;color:#555;transform:scaleX(1.0031);">Firmware/Config</div>
<div class="t" style="left:269.6px;top:75.5px;font-size:12px;color:#555;transform:scaleX(1.0261);">Other</div>
<div class="t" style="left:17.8px;top:109.5px;font-size:12px;color:#000;transform:scaleX(0.9661);">Pro3</div>
<div class="t" style="left:49.1px;top:109.5px;font-size:12px;color:#000;transform:scaleX(0.9617);">Firmware:</div>
<div class="t" style="left:103.9px;top:109.5px;font-size:12px;color:#000;transform:scaleX(0.9139);">1.3.16</div>
<div class="t" style="left:137.6px;top:109.5px;font-size:12px;color:#000;transform:scaleX(0.8963);">CPU:</div>
<div class="t" style="left:166.3px;top:109.5px;font-size:12px;color:#000;transform:scaleX(0.9113);">PIC18F57K42</div>
<div class="t" style="left:238.6px;top:109.5px;font-size:12px;color:#000;transform:scaleX(0.9320);">Revision</div>
<div class="t" style="left:284.7px;top:109.5px;font-size:12px;color:#000;transform:scaleX(1.0009);">A3</div>
<div class="t" style="left:302.4px;top:109.5px;font-size:12px;color:#000;transform:scaleX(0.9525);">A003</div>
<div class="t" style="left:333.1px;top:109.5px;font-size:12px;color:#000;transform:scaleX(0.9290);">Serial:</div>
<div class="t" style="left:368.3px;top:109.5px;font-size:12px;color:#000;transform:scaleX(0.9498);">2103301082</div>
<div class="t" style="left:436.3px;top:109.5px;font-size:12px;color:#000;transform:scaleX(0.9919);">Manufactured:</div>
<div class="t" style="left:515.8px;top:109.5px;font-size:12px;color:#000;transform:scaleX(0.9936);">2021-04-28</div>
<div class="t" style="left:581.1px;top:109.5px;font-size:12px;color:#000;transform:scaleX(0.9303);">Rated</div>
<div class="t" style="left:614.6px;top:109.5px;font-size:12px;color:#000;transform:scaleX(0.9856);">current:</div>
<div class="t" style="left:658.6px;top:109.5px;font-size:12px;color:#000;transform:scaleX(0.9668);">5A</div>
<div class="t" style="left:676.0px;top:109.5px;font-size:12px;color:#000;transform:scaleX(0.9680);">Battery</div>
<div class="t" style="left:716.4px;top:109.5px;font-size:12px;color:#000;transform:scaleX(0.9454);">Capacity:</div>
<div class="t" style="left:767.6px;top:109.5px;font-size:12px;color:#000;transform:scaleX(0.9775);">14Ah</div>
<div class="t" style="left:798.3px;top:109.5px;font-size:12px;color:#000;transform:scaleX(0.9903);">Protocol:</div>
<div class="t" style="left:848.4px;top:109.5px;font-size:12px;color:#000;transform:scaleX(0.9989);">Vanderbilt</div>
<div class="t" style="left:905.3px;top:109.5px;font-size:12px;color:#000;transform:scaleX(0.9260);">OSDP</div>
<div class="t" style="left:940.6px;top:109.5px;font-size:12px;color:#000;transform:scaleX(0.9225);">(Enabled)</div>
<div class="t" style="left:70.4px;top:334.5px;font-size:12px;color:#000;transform:scaleX(0.9464);">PSU Voltage</div>
<div class="t" style="left:247.4px;top:334.5px;font-size:12px;color:#000;transform:scaleX(0.9878);">Battery Voltage</div>
<div class="t" style="left:806.1px;top:333.5px;font-size:12px;color:#000;transform:scaleX(0.9885);">Temperature</div>
<div class="t" style="left:18.2px;top:426.9px;font-size:12px;color:#000;transform:scaleX(0.9045);">Relay 1</div>
<div class="t" style="left:108.2px;top:426.9px;font-size:12px;color:#808080;transform:scaleX(0.9596);">Delayed AC-Fail</div>
<div class="t" style="left:18.2px;top:459.9px;font-size:12px;color:#000;transform:scaleX(0.9045);">Relay 2</div>
<div class="t" style="left:108.0px;top:459.5px;font-size:12px;color:#808080;transform:scaleX(0.8547);">PSU</div>
<div class="t" style="left:132.7px;top:459.5px;font-size:12px;color:#808080;transform:scaleX(1.0261);">Undervolt</div>
<div class="t" style="left:188.0px;top:459.5px;font-size:12px;color:#808080;transform:scaleX(0.9063);">TestFail,</div>
<div class="t" style="left:232.2px;top:459.5px;font-size:12px;color:#808080;transform:scaleX(0.8833);">Lo</div>
<div class="t" style="left:247.2px;top:459.5px;font-size:12px;color:#808080;transform:scaleX(1.0702);">volt</div>
<div class="t" style="left:270.8px;top:459.5px;font-size:12px;color:#808080;transform:scaleX(1.0192);">during</div>
<div class="t" style="left:308.4px;top:459.5px;font-size:12px;color:#808080;transform:scaleX(0.8893);">AC,</div>
<div class="t" style="left:330.0px;top:459.5px;font-size:12px;color:#808080;transform:scaleX(0.8506);">PSU</div>
<div class="t" style="left:354.5px;top:459.5px;font-size:12px;color:#808080;transform:scaleX(0.9830);">Overvolt,</div>
<div class="t" style="left:405.3px;top:459.5px;font-size:12px;color:#808080;transform:scaleX(0.9900);">Old</div>
<div class="t" style="left:427.9px;top:459.5px;font-size:12px;color:#808080;transform:scaleX(0.9092);">Batteries,</div>
<div class="t" style="left:478.2px;top:459.5px;font-size:12px;color:#808080;transform:scaleX(0.9588);">BatExist</div>
<div class="t" style="left:523.3px;top:459.5px;font-size:12px;color:#808080;transform:scaleX(0.8948);">Te...</div>
<div class="t" style="left:18.2px;top:492.9px;font-size:12px;color:#000;transform:scaleX(0.9045);">Relay 3</div>
<div class="t" style="left:108.2px;top:492.9px;font-size:12px;color:#808080;transform:scaleX(0.9934);">Lo system volt</div>
<div class="t" style="left:18.2px;top:525.9px;font-size:12px;color:#000;transform:scaleX(0.9045);">Relay 4</div>
<div class="t" style="left:108.2px;top:525.9px;font-size:12px;color:#808080;transform:scaleX(0.9921);">Tamper</div>
<div class="t" style="left:18.2px;top:578.5px;font-size:12px;color:#000;transform:scaleX(0.9628);">Battery</div>
<div class="t" style="left:58.6px;top:578.5px;font-size:12px;color:#000;transform:scaleX(0.9783);">Connection</div>
<div class="t" style="left:122.6px;top:578.5px;font-size:12px;color:#000;transform:scaleX(0.9422);">Status:</div>
<div class="t" style="left:170.0px;top:578.5px;font-size:12px;color:#000;transform:scaleX(0.9768);">Connected</div>
<div class="t" style="left:230.5px;top:578.5px;font-size:12px;color:#000;transform:scaleX(0.9962);">(normal)</div>
<div class="t" style="left:18.2px;top:626.5px;font-size:12px;color:#000;transform:scaleX(0.8263);">PSU</div>
<div class="t" style="left:43.2px;top:626.5px;font-size:12px;color:#000;transform:scaleX(0.9172);">PWM</div>
<div class="t" style="left:75.5px;top:626.5px;font-size:12px;color:#000;transform:scaleX(0.9651);">Regulation:</div>
<div class="t" style="left:170.4px;top:626.5px;font-size:12px;color:#000;transform:scaleX(0.9954);">Unknown</div>
<div class="t" style="left:2.3px;top:689.5px;font-size:12px;color:#000;transform:scaleX(1.0297);">on-line</div>
<div class="t" style="left:42.9px;top:689.5px;font-size:12px;color:#000;transform:scaleX(0.9989);">(Mille2)</div>
<div class="t" style="left:831.6px;top:370.5px;font-size:12px;color:#000;transform:scaleX(0.9947);">Aged Batteries</div>
<div class="t" style="left:831.6px;top:403.5px;font-size:12px;color:#000;transform:scaleX(0.9614);">Battery Resting Phase</div>
<div class="t" style="left:831.6px;top:436.5px;font-size:12px;color:#000;transform:scaleX(0.9901);">Battery Time Warning</div>
<div class="t" style="left:602.9px;top:469.5px;font-size:12px;color:#000;transform:scaleX(0.8466);">PSU</div>
<div class="t" style="left:628.0px;top:469.5px;font-size:12px;color:#000;transform:scaleX(1.0015);">Undervoltage</div>
<div class="t" style="left:831.6px;top:469.5px;font-size:12px;color:#000;transform:scaleX(1.0025);">Operating Time on Batteries</div>
<div class="t" style="left:602.9px;top:502.5px;font-size:12px;color:#000;transform:scaleX(0.8466);">PSU</div>
<div class="t" style="left:628.0px;top:502.5px;font-size:12px;color:#000;transform:scaleX(0.9922);">Overvoltage</div>
<div class="t" style="left:831.6px;top:502.5px;font-size:12px;color:#000;transform:scaleX(1.0055);">Battery not fully Charged</div>
<div class="t" style="left:602.9px;top:535.5px;font-size:12px;color:#000;transform:scaleX(0.9730);">Low System Voltage</div>
<div class="t" style="left:831.6px;top:535.5px;font-size:12px;color:#000;transform:scaleX(0.9689);">Faulty Fan (3060rpm)</div>
<div class="t" style="left:602.9px;top:568.5px;font-size:12px;color:#000;transform:scaleX(1.0011);">Low Voltage in Batterymode</div>
<div class="t" style="left:831.6px;top:568.5px;font-size:12px;color:#000;transform:scaleX(0.9992);">Sensor error, temperature</div>
<div class="t" style="left:602.9px;top:601.5px;font-size:12px;color:#000;transform:scaleX(0.9719);">Charger Error</div>
<div class="t" style="left:831.6px;top:601.5px;font-size:12px;color:#000;transform:scaleX(1.0119);">High Temperature</div>
<div class="t" style="left:602.9px;top:634.5px;font-size:12px;color:#000;transform:scaleX(0.9896);">Testload Missing</div>
<div class="t" style="left:831.6px;top:634.5px;font-size:12px;color:#000;transform:scaleX(0.9978);">Low Temperature</div>
<div class="t" style="left:602.6px;top:370.5px;font-size:12px;color:#000;transform:scaleX(1.0000);">Mains Failure</div>
<div class="t" style="left:698.1px;top:370.5px;font-size:12px;color:#000;transform:scaleX(0.9160);">(AC)</div>
<div class="t" style="left:602.6px;top:437.0px;font-size:12px;color:#000;transform:scaleX(0.9667);">Fuse</div>
<!-- dialog -->
<div class="abs" style="left:338px;top:261px;width:364px;height:188px;background:#f0f0f0;border:1px solid #6a6a6a;box-shadow:0 3px 18px rgba(0,0,0,0.38)"></div>
<div class="abs" style="left:339px;top:262px;width:362px;height:30px;background:#fff"></div>
<div class="abs" style="left:403px;top:396px;width:80px;height:22px;background:#e1e1e1;border:1px solid #adadad"></div>
<div class="abs" style="left:555px;top:396px;width:80px;height:22px;background:#e1e1e1;border:1px solid #adadad"></div>
<div class="t" style="left:346.9px;top:268.5px;font-size:12px;color:#000;transform:scaleX(0.9956);">New firmware available</div>
<div class="t" style="left:372.4px;top:317.0px;font-size:12px;color:#000;transform:scaleX(0.9984);">A new firmware is available, would you like to upgrade?</div>
<div class="t" style="left:511.8px;top:341.5px;font-size:12px;color:#000;transform:scaleX(0.9828);">1.5</div>
<div class="t" style="left:434.6px;top:399.5px;font-size:12px;color:#000;transform:scaleX(1.1145);">No</div>
<div class="t" style="left:585.8px;top:399.5px;font-size:12px;color:#000;transform:scaleX(0.9245);">Yes</div>
</body></html>
